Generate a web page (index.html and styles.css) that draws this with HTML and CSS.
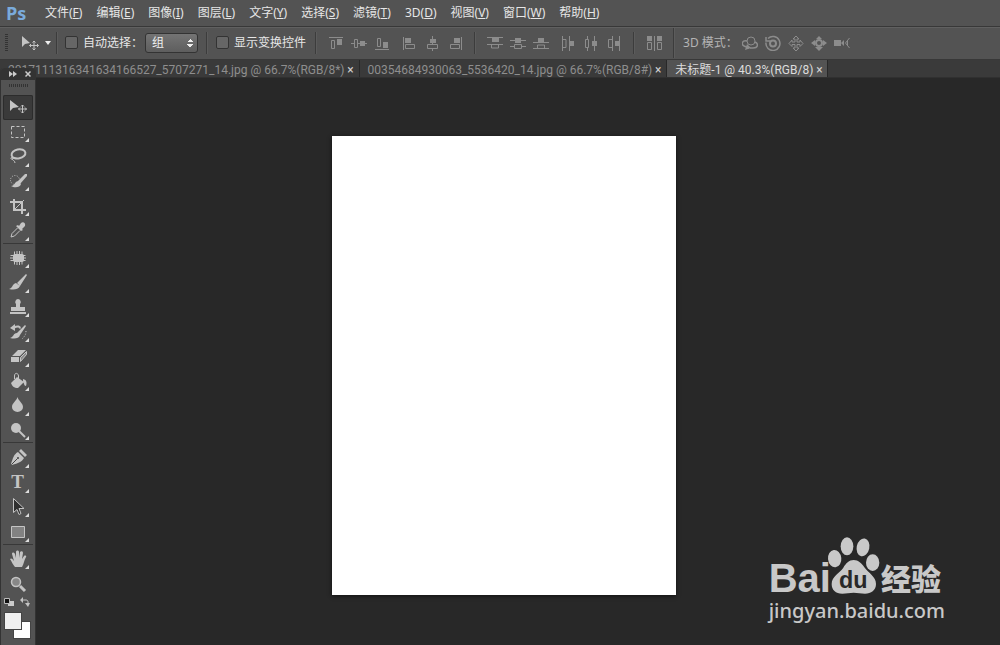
FILE: index.html
```html
<!DOCTYPE html>
<html lang="zh-CN">

<head>
  <meta charset="utf-8">
  <title>未标题-1 @ 40.3%(RGB/8)</title>
  <link rel="stylesheet" href="styles.css">
</head>

<body>
  <!-- Menu -->
  <nav class="menubar">
    <span class="logo">Ps</span>
    <a href="#">文件(<u>F</u>)</a>
    <a href="#">编辑(<u>E</u>)</a>
    <a href="#">图像(<u>I</u>)</a>
    <a href="#">图层(<u>L</u>)</a>
    <a href="#">文字(<u>Y</u>)</a>
    <a href="#">选择(<u>S</u>)</a>
    <a href="#">滤镜(<u>T</u>)</a>
    <a href="#">3D(<u>D</u>)</a>
    <a href="#">视图(<u>V</u>)</a>
    <a href="#">窗口(<u>W</u>)</a>
    <a href="#">帮助(<u>H</u>)</a>
  </nav>

  <!-- Options for the move tool -->
  <div class="options">
    <span class="grip"></span>
    <button class="preset" aria-label="移动工具">
      <svg width="18" height="16" viewBox="0 0 18 16"><path class="f" d="M1 1v11l3-3 5-1z"/><path class="s" d="M13 6v9M8.500 10.500h9M11.500 7.500L13 6l1.500 1.500M11.500 13.500L13 15l1.500-1.500M10 9l-1.500 1.500L10 12M16 9l1.500 1.500L16 12"/></svg>
      <svg width="6" height="4" viewBox="0 0 6 4"><path fill="#eee" d="M0 0h6L3 4z"/></svg>
    </button>
    <span class="line"></span>
    <label class="check check-auto"><input type="checkbox">自动选择：</label>
    <select class="group-select" aria-label="自动选择">
      <option>组</option>
      <option>图层</option>
    </select>
    <span class="line"></span>
    <label class="check check-show"><input type="checkbox">显示变换控件</label>
    <span class="line"></span>

    <div class="align">
      <button aria-label="顶对齐"><svg viewBox="0 0 16 16"><path class="s" d="M1 2.500h14M3.500 5.500h3v8h-3z"/><path class="f" d="M9 4h5v6H9z"/></svg></button>
      <button aria-label="垂直居中对齐"><svg viewBox="0 0 16 16"><path class="s" d="M0 8.500h3M7 8.500h9M3.500 4.500h3v8h-3z"/><path class="f" d="M9 6h5v5H9z"/></svg></button>
      <button aria-label="底对齐"><svg viewBox="0 0 16 16"><path class="s" d="M1 14.500h14M3.500 3.500h3v8h-3z"/><path class="f" d="M9 7h5v6H9z"/></svg></button>
    </div>
    <div class="align">
      <button aria-label="左对齐"><svg viewBox="0 0 16 16"><path class="s" d="M2.500 2v13M4.500 9.500h9v4h-9z"/><path class="f" d="M4 3h6v5H4z"/></svg></button>
      <button aria-label="水平居中对齐"><svg viewBox="0 0 16 16"><path class="s" d="M8.500 1v3M8.500 8v2M8.500 13v3M3.500 9.500h10v4h-10z"/><path class="f" d="M6 4h6v4H6z"/></svg></button>
      <button aria-label="右对齐"><svg viewBox="0 0 16 16"><path class="s" d="M14.500 2v13M3.500 9.500h9v4h-9z"/><path class="f" d="M7 3h6v5H7z"/></svg></button>
    </div>
    <span class="line"></span>
    <div class="align">
      <button aria-label="按顶分布"><svg viewBox="0 0 16 16"><path class="s" d="M0 2.500h16M0 9.500h16M4.500 10v3h7v-3"/><path class="f" d="M5 3h7v4H5z"/></svg></button>
      <button aria-label="垂直居中分布"><svg viewBox="0 0 16 16"><path class="s" d="M0 5.500h16M0 11.500h4M12 11.500h4M4.500 9.500h7v4h-7z"/><path class="f" d="M5 3h6v5H5z"/></svg></button>
      <button aria-label="按底分布"><svg viewBox="0 0 16 16"><path class="s" d="M0 7.500h16M0 13.500h16M4.500 13v-3h7v3"/><path class="f" d="M5 3h6v4H5z"/></svg></button>
    </div>
    <div class="align">
      <button aria-label="按左分布"><svg viewBox="0 0 16 16"><path class="s" d="M2.500 1v15M9.500 1v15M3 4.500h3v8H3"/><path class="f" d="M10 6h4v5h-4z"/></svg></button>
      <button aria-label="水平居中分布"><svg viewBox="0 0 16 16"><path class="s" d="M4.500 1v3M4.500 13v3M11.500 1v15M2.500 4.500h3v8h-3z"/><path class="f" d="M9 6h5v5H9z"/></svg></button>
      <button aria-label="按右分布"><svg viewBox="0 0 16 16"><path class="s" d="M6.500 1v15M13.500 1v15M6 4.500H2.500v8H6"/><path class="f" d="M9 6h4v5H9z"/></svg></button>
    </div>
    <span class="line"></span>
    <div class="align">
      <button aria-label="自动对齐图层"><svg viewBox="0 0 16 16"><path class="s" d="M8.500 1v15M1.500 7.500h4v7h-4zM11.500 7.500h4v7h-4z"/><path class="f" d="M1 1h5v5H1zM11 1h5v5h-5z"/></svg></button>
    </div>
    <span class="line line-light"></span>
    <span class="mode">3D 模式：</span>
    <div class="align">
      <button aria-label="旋转 3D 对象"><svg viewBox="0 0 16 16"><circle class="s" cx="9" cy="6" r="4"/><path class="s" stroke-width="1.500" d="M5 6C0 5-1 9 2 11l5 2M13 7c4 2 3 6-2 6H8"/><path class="f" d="M5 9l4 4-6 2z"/></svg></button>
      <button aria-label="滚动 3D 对象"><svg viewBox="0 0 16 16"><circle class="s" stroke-width="2" cx="8" cy="8.500" r="3"/><path class="s" stroke-width="1.500" d="M3 3.500a7 7 0 1 1-2 4M1 2v4h4"/></svg></button>
      <button aria-label="拖动 3D 对象"><svg viewBox="0 0 16 16"><path class="s" d="M8 1l3 3H9v3h3V5l3 3.500-3 3V9.500H9V13h2l-3 3-3-3h2V9.500H4v2l-3-3L4 5v2h3V4H5z"/></svg></button>
      <button aria-label="滑动 3D 对象"><svg viewBox="0 0 16 16"><circle class="s s2" cx="8" cy="8" r="3"/><path class="f" d="M0 8l4-3v6zM16 8l-4-3v6zM8 16l-4-4h8zM5 4l3-3 3 3z"/></svg></button>
      <button aria-label="缩放 3D 对象"><svg viewBox="0 0 16 16"><path class="f" d="M0 5h7v6H0zM7 8l3-3v6z"/><path class="s" d="M15.500 3l-4 5 4 5M13.500 6v4"/></svg></button>
    </div>
  </div>

  <!-- Open documents -->
  <div class="tabs">
    <div class="tab"><span>2017111316341634166527_5707271_14.jpg @ 66.7%(RGB/8*)</span><button aria-label="关闭">×</button></div>
    <div class="tab"><span>00354684930063_5536420_14.jpg @ 66.7%(RGB/8#)</span><button aria-label="关闭">×</button></div>
    <div class="tab active"><span>未标题-1 @ 40.3%(RGB/8)</span><button aria-label="关闭">×</button></div>
  </div>

  <main class="workspace">
    <div class="document"></div>
  </main>

  <!-- Floating tool panel -->
  <aside class="toolbox">
    <header>
      <svg width="8" height="6" viewBox="0 0 8 6"><path fill="#ccc" d="M0 0l4 3-4 3zM4 0l4 3-4 3z"/></svg>
      <svg width="6" height="6" viewBox="0 0 6 6"><path stroke="#ccc" stroke-width="1.500" d="M0.500 0.500l5 5M5.500 0.500l-5 5"/></svg>
    </header>
    <span class="panel-grip"></span>
    <div class="tools">
      <div class="set set-select">
        <button class="on" aria-label="移动"><svg viewBox="0 0 20 20"><path class="f" d="M2 3v11l3-3 6-1z"/><path class="s" d="M14.500 8v8M10.500 12h8M13 9.500L14.500 8 16 9.500M13 14.500l1.500 1.500 1.500-1.500M12 10.500L10.500 12l1.500 1.500M17 10.500l1.500 1.500-1.500 1.500"/></svg></button>
        <button aria-label="矩形选框"><svg viewBox="0 0 20 20"><path class="s" stroke-dasharray="3 2" d="M3.500 4.500h13v11h-13z"/></svg></button>
        <button aria-label="套索"><svg viewBox="0 0 20 20"><ellipse class="s s2" cx="10.500" cy="8" rx="7" ry="4.500" transform="rotate(-12 10 8)"/><path class="s" d="M4 11c-2 1-1 3 1 2s-1-3-1-1c0 3 3 2 3 5"/></svg></button>
        <button aria-label="快速选择"><svg viewBox="0 0 20 20"><circle class="s" stroke-dasharray="1 1.500" cx="7" cy="9" r="4.500"/><path class="f" d="M19 3v2l-7 8-3-2 8-8zM10 10l3 3c-1 4-7 4-10 2 4 0 3-4 7-5z"/></svg></button>
        <button aria-label="裁剪"><svg viewBox="0 0 20 20"><path class="s s2" d="M6 3v11h12M2 6h12v12"/><path class="s" d="M6 14l10-10"/></svg></button>
        <button aria-label="吸管"><svg viewBox="0 0 20 20"><path class="f" d="M13 3c2-2 5 0 4 3l-3 3 1 1-2 1-5-5 2-1 1 1z"/><path class="s" d="M9.500 8L4 13.500 3 17l3.500-1L12 10.500"/></svg></button>
      </div>
      <div class="set set-paint">
        <button aria-label="修补"><svg viewBox="0 0 20 20"><rect class="f" x="5" y="6" width="11" height="8" rx="2"/><path class="s" d="M6.500 3.500v13M9 3v14M11.500 3v14M14 3.500v13M2.500 7.500h15M2 10h16M2.500 12.500h15"/></svg></button>
        <button aria-label="画笔"><svg viewBox="0 0 20 20"><path class="f" d="M18 2l1 1-7 11-3-3zM8 11l4 3c-2 4-7 4-11 3 4-1 3-5 7-6z"/></svg></button>
        <button aria-label="仿制图章"><svg viewBox="0 0 20 20"><path class="f" d="M10 2a3 3 0 0 1 2 5v3h5v4H3v-4h5V7a3 3 0 0 1 2-5zM2 15h16v2H2z"/></svg></button>
        <button aria-label="历史记录画笔"><svg viewBox="0 0 20 20"><path class="f" d="M17 3l1 1-6 9-3-2zM9 11l3 2c-1 4-6 4-10 3 4-1 3-5 7-5zM2 6l5-4v7z"/><path class="s s2" d="M6 5.500c4-2 6-1 6 1"/><path class="s" stroke-dasharray="1 1.500" d="M18 9c0 4-2 6-4 8"/></svg></button>
        <button aria-label="橡皮擦"><svg viewBox="0 0 20 20"><path class="f" d="M10 4h8l-6 6H4zM3 11h8v5H3z"/><path fill="#8c8c8c" stroke="#c4c4c4" d="M12.500 11.500l6-6v3l-6 7z"/></svg></button>
        <button aria-label="油漆桶"><svg viewBox="0 0 20 20"><path class="f" d="M9 6l7 5-6 6c-4 0-6-2-7-5zM15 8c4 1 4 4 3 7-2 0-2-3-3-5z"/><path class="s" d="M6.500 8V5c0-4 4-3 4 0v4"/></svg></button>
        <button aria-label="模糊"><svg viewBox="0 0 20 20"><path class="f" d="M9.500 2c1 4 5.500 6 5.500 10a5.500 5 0 0 1-11 0c0-4 4.500-6 5.500-10z"/></svg></button>
        <button aria-label="减淡"><svg viewBox="0 0 20 20"><circle class="f" cx="8" cy="8" r="5"/><path class="s s2" d="M11 11l6 6"/></svg></button>
      </div>
      <div class="set set-vector">
        <button aria-label="钢笔"><svg viewBox="0 0 20 20"><path class="f" d="M13 1l6 6-2 2-6-6zM10 4l6 6c-2 4-6 5-12 7l-1-1c2-6 3-10 7-12z"/><path stroke="#444" d="M3.500 16.500l6-6"/><circle fill="#444" cx="10" cy="10" r="1"/></svg></button>
        <button class="type" aria-label="文字">T</button>
        <button aria-label="路径选择"><svg viewBox="0 0 20 20"><path fill="#303030" stroke="#c4c4c4" d="M5.500 1.500v14l3.500-3 2 5 2-1-2-5h5z"/></svg></button>
        <button aria-label="矩形"><svg viewBox="0 0 20 20"><path fill="#828282" stroke="#c4c4c4" d="M3.500 4.500h13v11h-13z"/></svg></button>
      </div>
      <div class="set set-view">
        <button aria-label="抓手"><svg viewBox="0 0 20 20"><path class="f" d="M7 18c-2-2-3-5-5-8 1-1 2-1 4 2L4 5c0-2 2-2 3 0l1 4V3c0-2 3-2 3 0v6l1-6c1-1 3-1 3 1l-1 6 2-3c1-1 3 0 2 1-2 3-2 7-4 10z"/></svg></button>
        <button class="single" aria-label="缩放"><svg viewBox="0 0 20 20"><circle fill="#888" stroke="#c4c4c4" stroke-width="1.500" cx="8" cy="8" r="4.500"/><path class="s s3" d="M12 12l5 5"/></svg></button>
      </div>
    </div>
    <div class="reset">
      <svg width="10" height="10" viewBox="0 0 10 10"><path fill="#ccc" d="M4 4h6v5H4z"/><path fill="#111" stroke="#bbb" d="M0.500 1.500h5v5h-5z"/></svg>
      <svg width="10" height="10" viewBox="0 0 10 10"><path class="s" d="M2 3h4c1.500 0 2 1 2 2v3"/><path class="f" d="M0 3l3-3v6zM5 6h5L8 10z"/></svg>
    </div>
    <div class="colors"><span class="back"></span><span class="front"></span></div>
  </aside>

  <!-- Watermark -->
  <div class="watermark">
    <div class="brand">
      <span class="bai">Bai</span>
      <svg width="54" height="58" viewBox="0 0 162 174">
        <g fill="#c8c8c8">
          <ellipse cx="60" cy="31" rx="19" ry="27"/>
          <ellipse cx="108" cy="34" rx="19" ry="27" transform="rotate(12 108 34)"/>
          <ellipse cx="23" cy="68" rx="20" ry="26" transform="rotate(-6 23 68)"/>
          <ellipse cx="137" cy="80" rx="20" ry="25"/>
          <path d="M80 72c14 0 24 10 32 22 12 17 35 28 35 50 0 19-15 29-33 29-12 0-22-3-34-3s-22 3-34 3c-20 0-32-11-32-29 0-24 24-32 35-49 8-13 17-23 31-23z"/>
        </g>
        <text class="du" x="36" y="156">du</text>
      </svg>
      <span class="jingyan">经验</span>
    </div>
    <div class="site">jingyan.baidu.com</div>
  </div>
</body>

</html>
```
FILE: styles.css
```css
* {
  box-sizing: border-box;
}

body {
  display: flex;
  flex-direction: column;
  min-height: 100vh;
  margin: 0;
  background-color: #282828;
  color: #e6e6e6;
  font-family: "Noto Sans", "Noto Sans CJK SC", sans-serif;
  font-size: 12px;
  line-height: 16px;
  position: relative;
}

button {
  margin: 0;
  padding: 0;
  border: 0;
  background: none;
  color: inherit;
  font: inherit;
}

svg {
  display: block;
  fill: none;
}

.f {
  fill: currentColor;
}

.s {
  stroke: currentColor;
}

.s2 {
  stroke-width: 2;
}

.s3 {
  stroke-width: 3;
}

/* menu */
.menubar {
  display: flex;
  align-items: center;
  gap: 14px;
  height: 27px;
  padding-left: 6px;
  background-color: #535353;
  border-bottom: 1px solid #383838;
}

.menubar a {
  color: #e6e6e6;
  text-decoration: none;
  white-space: nowrap;
}

.logo {
  width: 25px;
  color: #7aabdc;
  font-family: "Open Sans", sans-serif;
  font-size: 18px;
  font-weight: 700;
}

/* options bar */
.options {
  display: flex;
  align-items: center;
  height: 33px;
  padding: 0 0 2px 5px;
  background-color: #535353;
  border-top: 1px solid #606060;
  border-bottom: 1px solid #383838;
  white-space: nowrap;
}

.grip {
  width: 3px;
  height: 18px;
  background: repeating-linear-gradient(#333 0 1px, #535353 1px 2px);
}

.preset {
  display: flex;
  align-items: center;
  gap: 6px;
  margin: 0 5px 0 13px;
  color: #c4c4c4;
}

.line {
  flex: none;
  width: 2px;
  height: 22px;
  border-left: 1px solid #3c3c3c;
  border-right: 1px solid #5c5c5c;
}

.line-light {
  height: 30px;
  margin-left: 11px;
}

.check {
  display: flex;
  align-items: center;
  gap: 5px;
}

.check input {
  appearance: none;
  width: 13px;
  height: 13px;
  margin: 0;
  border: 1px solid #333;
  border-radius: 2px;
  background-color: #666;
}

.check-auto {
  width: 80px;
  margin-left: 7px;
}

.check-show {
  margin: 0 9px 0 8px;
}

.group-select {
  appearance: none;
  width: 53px;
  height: 20px;
  margin: 0 8px 0 0;
  padding: 0 6px;
  border: 1px solid #333;
  border-radius: 3px;
  background:
    conic-gradient(from 135deg at 50% 0, #eee 0 90deg, transparent 90deg) right 4px top 5px / 6px 3px no-repeat,
    conic-gradient(from 315deg at 50% 100%, #eee 0 90deg, transparent 90deg) right 4px top 10px / 6px 3px no-repeat,
    linear-gradient(#747474, #5e5e5e);
  color: #f0f0f0;
  font: inherit;
}

.align {
  display: flex;
  gap: 7px;
  margin-left: 11px;
  color: #8c8c8c;
}

.align + .line {
  margin-left: 11px;
}

.align svg {
  width: 16px;
  height: 16px;
}

.mode {
  width: 48px;
  margin-left: 8px;
  color: #b4b4b4;
}

/* document tabs */
.tabs {
  display: flex;
  height: 18px;
  background-color: #3a3a3a;
  border-bottom: 1px solid #303030;
  font-family: Roboto, "Noto Sans CJK SC", sans-serif;
  line-height: 18px;
}

.tab {
  display: flex;
  align-items: center;
  gap: 2px;
  padding: 2px 4px 0 8px;
  border-right: 1px solid #282828;
  color: #8e8e8e;
  white-space: nowrap;
}

.tab button {
  width: 8px;
  color: #d0d0d0;
}

.tab.active {
  background-color: #535353;
  color: #dcdcdc;
}

/* canvas area */
.workspace {
  flex: 1;
  display: flex;
  align-items: center;
  justify-content: center;
  padding: 8px 0 0 8px;
}

.document {
  width: 344px;
  aspect-ratio: 3 / 4;
  background-color: #fff;
  box-shadow: 0 1px 4px #111;
}

/* floating tool panel */
.toolbox {
  position: absolute;
  top: 68px;
  left: 0;
  width: 36px;
  min-height: calc(100% - 68px);
  background-color: #535353;
  border-left: 1px solid #333;
  border-right: 1px solid #333;
  border-radius: 4px 4px 0 0;
}

.toolbox header {
  display: flex;
  align-items: center;
  justify-content: space-between;
  height: 12px;
  padding: 0 4px 0 8px;
  background-color: #333;
  border-radius: 3px 3px 0 0;
}

.panel-grip {
  display: block;
  width: 19px;
  height: 3px;
  margin: 4px auto 8px 8px;
  background: repeating-linear-gradient(90deg, #333 0 1px, #535353 1px 2px);
}

.tools {
  display: flex;
  flex-direction: column;
  height: 501px;
  padding: 0 2px;
}

.set {
  display: flex;
  flex-direction: column;
}

.set-select {
  flex: 6;
}

.set-paint {
  flex: 8;
}

.set-vector {
  flex: 4;
}

.set-view {
  flex: 2;
}

.set + .set {
  padding-top: 2px;
  border-top: 1px solid #383838;
}

.set button {
  flex: 1;
  display: flex;
  align-items: center;
  justify-content: center;
  position: relative;
  padding-right: 1px;
  border-radius: 2px;
  color: #c4c4c4;
}

.set svg {
  width: 20px;
  height: 20px;
}

/* corner mark for tools that open a flyout */
.set button::after {
  content: "";
  position: absolute;
  right: 4px;
  bottom: 2px;
  border: 2px solid transparent;
  border-right-color: #ddd;
  border-bottom-color: #ddd;
}

.set .on::after,
.set .single::after {
  display: none;
}

.set .on {
  background-color: #3a3a3a;
  box-shadow: inset 0 0 0 1px #2c2c2c;
}

.set .type {
  font-family: "Liberation Serif", serif;
  font-size: 19px;
  font-weight: 700;
}

.reset {
  display: flex;
  justify-content: space-between;
  padding: 1px 5px 0 3px;
  color: #c4c4c4;
}

.colors {
  display: grid;
  grid-template-columns: 9px 9px 9px;
  grid-template-rows: 9px 9px 9px;
  padding: 5px 0 4px 3px;
}

.front,
.back {
  border: 1px solid #444;
  background-color: #fff;
}

.back {
  grid-area: 2 / 2 / 4 / 4;
}

.front {
  grid-area: 1 / 1 / 3 / 3;
  background-color: #f0f0f0;
}

/* watermark */
.watermark {
  position: absolute;
  right: 55px;
  bottom: 20px;
  color: #c8c8c8;
}

.brand {
  display: flex;
  align-items: flex-end;
}

.brand svg {
  margin: 0 0 3px -4px;
}

.bai {
  font: 700 40px/38px "Liberation Sans", sans-serif;
}

.du {
  fill: #282828;
  font: 700 70px "Liberation Sans", sans-serif;
}

.jingyan {
  font: 900 30px/34px "Liberation Sans", "Noto Sans CJK SC", sans-serif;
}

.site {
  font-size: 20px;
  font-weight: 500;
  line-height: 28px;
}
```
